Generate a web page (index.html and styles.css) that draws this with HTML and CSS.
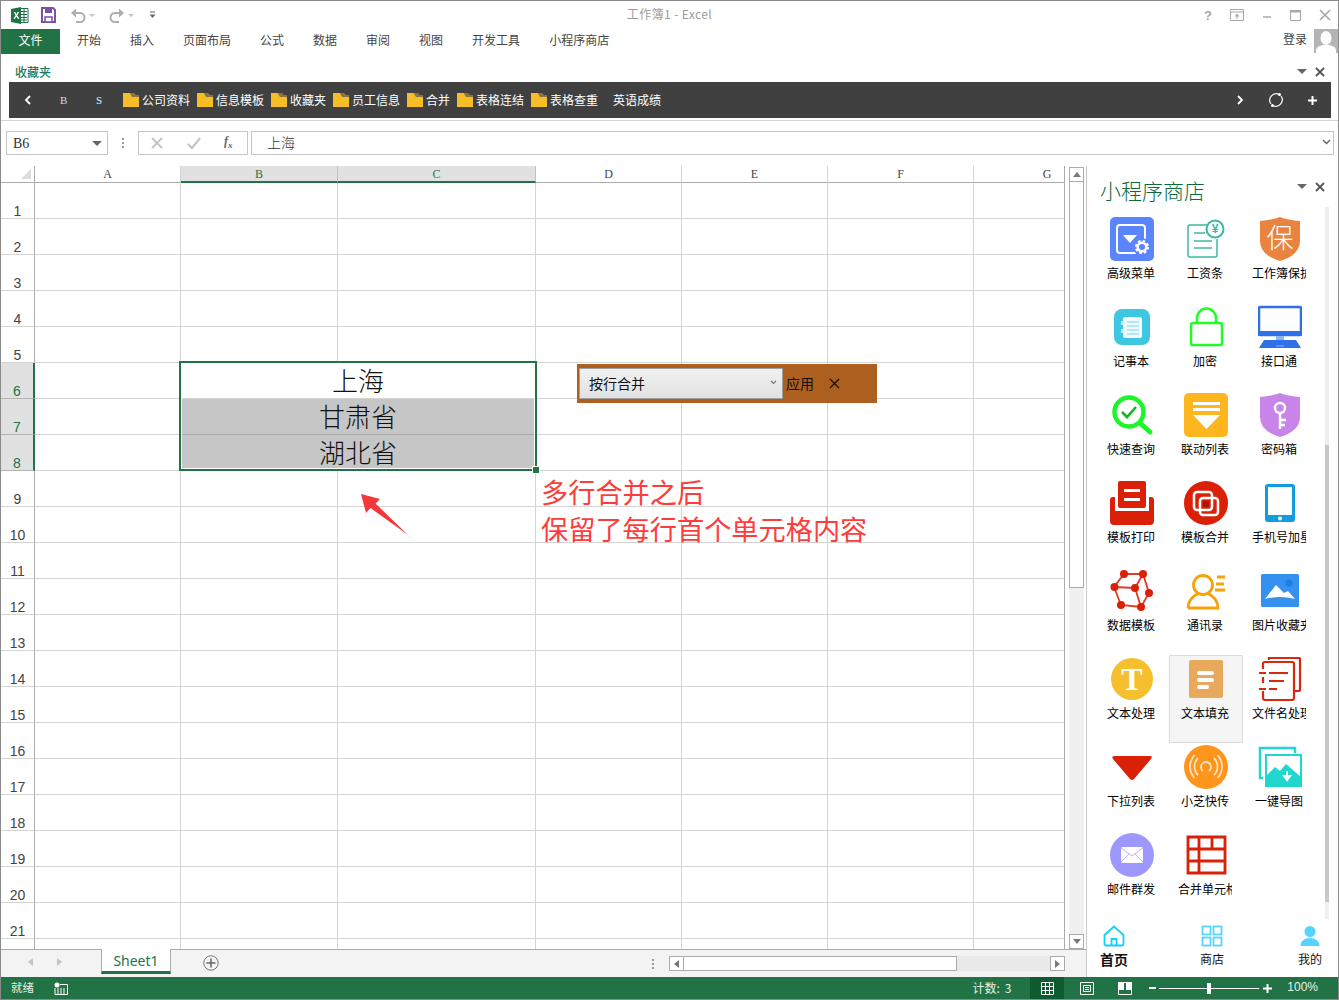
FILE: index.html
```html
<!DOCTYPE html>
<html lang="zh-CN">
<head>
<meta charset="utf-8">
<title>工作簿1 - Excel</title>
<link rel="stylesheet" href="styles.css">
</head>
<body>
<div class="window">
  <header class="titlebar">
    <div class="qat">
      <svg class="qi-xl" width="18" height="17" viewBox="0 0 18 17"><path d="M7 1.500h10v14H7z" fill="#fff" stroke="#217346"/><path d="M10 4.500h6M10 7.500h6M10 10.500h6M10 13h6M13 2v13" stroke="#217346"/><path d="M0 2l10-2v17L0 15z" fill="#217346"/><path d="M2.600 5l2 3.300-2.200 3.500h1.600l1.400-2.400 1.400 2.400h1.700L6.200 8.300l2-3.300H6.600L5.400 7.200 4.200 5z" fill="#fff"/></svg>
      <svg class="qi-save" width="15" height="16" viewBox="0 0 15 16"><path d="M1 1h11l2 2v12H1z" fill="#fff" stroke="#7d4fa5" stroke-width="2"/><path d="M4 1h7v5H4z" fill="#7d4fa5"/><path d="M4 10h7v5H4z" fill="#fff" stroke="#7d4fa5" stroke-width="1.500"/></svg>
      <svg class="qi-undo" width="16" height="15" viewBox="0 0 16 15"><path d="M3 5h7a4.500 4.500 0 0 1 0 9H6" fill="none" stroke="#aeaeae" stroke-width="2"/><path d="M6 0.500v9L1 5z" fill="#aeaeae"/></svg>
      <span class="caret-s"></span>
      <svg class="qi-redo" width="16" height="15" viewBox="0 0 16 15"><path d="M13 5H6a4.500 4.500 0 0 0 0 9h4" fill="none" stroke="#aeaeae" stroke-width="2"/><path d="M10 0.500v9L15 5z" fill="#aeaeae"/></svg>
      <span class="caret-s"></span>
      <svg class="qi-cust" width="7" height="8" viewBox="0 0 7 8"><path d="M1 1h5" stroke="#666"/><path d="M0.500 3.500h6L3.500 7z" fill="#666"/></svg>
    </div>
    <div class="doc-title">工作簿1 - Excel</div>
    <div class="winbtns">
      <span class="help">?</span>
      <svg width="14" height="12" viewBox="0 0 14 12"><path d="M.5.500h13v11H.500zM.5 3h13" fill="none" stroke="#a8a8a8"/><path d="M7 4.500l2.500 3h-5zM6.500 7h1v3h-1z" fill="#a8a8a8"/></svg>
      <svg width="10" height="10" viewBox="0 0 10 10"><path d="M1 7h8" stroke="#a8a8a8" stroke-width="1.500"/></svg>
      <svg width="11" height="11" viewBox="0 0 11 11"><path d="M.5 1.500h10v9H.500z" fill="none" stroke="#a8a8a8"/><path d="M0 0h11v2.500H0z" fill="#a8a8a8"/></svg>
      <svg width="12" height="12" viewBox="0 0 12 12"><path d="M1 1l10 10M11 1L1 11" stroke="#a8a8a8" stroke-width="1.600"/></svg>
    </div>
  </header>

  <nav class="ribbon-tabs">
    <span class="file-tab">文件</span>
    <ul class="tab-list">
      <li>开始</li><li>插入</li><li>页面布局</li><li>公式</li><li>数据</li><li>审阅</li><li>视图</li><li>开发工具</li><li>小程序商店</li>
    </ul>
    <span class="login">登录</span>
    <svg class="avatar" width="24" height="24" viewBox="0 0 24 24"><path d="M0 0h24v24H0z" fill="#b4b4b4"/><ellipse cx="12" cy="9" rx="5.500" ry="7" fill="#fff"/><path d="M2 24v-3c0-3 4-5 10-5s10 2 10 5v3z" fill="#fff"/></svg>
  </nav>

  <section class="favorites">
    <div class="fav-head">
      <span class="fav-title">收藏夹</span>
      <span class="pane-ctl"><i class="tri"></i><svg width="10" height="10" viewBox="0 0 10 10"><path d="M1 1l8 8M9 1L1 9" stroke="#555" stroke-width="1.800"/></svg></span>
    </div>
    <div class="fav-bar">
      <svg class="chev-l" width="7" height="10" viewBox="0 0 7 10"><path d="M6 1L2 5l4 4" fill="none" stroke="#fff" stroke-width="1.800"/></svg>
      <span class="fav-b">B</span>
      <span class="fav-s">S</span>
      <span class="fav-item"><svg class="folder" width="16" height="14" viewBox="0 0 16 14"><path d="M0 0h7l2 3h7v11H0z" fill="#f6bd27"/><path d="M7 0h4l2 2h3v2H9z" fill="#8a7440"/></svg>公司资料</span>
      <span class="fav-item"><svg class="folder" width="16" height="14" viewBox="0 0 16 14"><path d="M0 0h7l2 3h7v11H0z" fill="#f6bd27"/><path d="M7 0h4l2 2h3v2H9z" fill="#8a7440"/></svg>信息模板</span>
      <span class="fav-item"><svg class="folder" width="16" height="14" viewBox="0 0 16 14"><path d="M0 0h7l2 3h7v11H0z" fill="#f6bd27"/><path d="M7 0h4l2 2h3v2H9z" fill="#8a7440"/></svg>收藏夹</span>
      <span class="fav-item"><svg class="folder" width="16" height="14" viewBox="0 0 16 14"><path d="M0 0h7l2 3h7v11H0z" fill="#f6bd27"/><path d="M7 0h4l2 2h3v2H9z" fill="#8a7440"/></svg>员工信息</span>
      <span class="fav-item"><svg class="folder" width="16" height="14" viewBox="0 0 16 14"><path d="M0 0h7l2 3h7v11H0z" fill="#f6bd27"/><path d="M7 0h4l2 2h3v2H9z" fill="#8a7440"/></svg>合并</span>
      <span class="fav-item"><svg class="folder" width="16" height="14" viewBox="0 0 16 14"><path d="M0 0h7l2 3h7v11H0z" fill="#f6bd27"/><path d="M7 0h4l2 2h3v2H9z" fill="#8a7440"/></svg>表格连结</span>
      <span class="fav-item"><svg class="folder" width="16" height="14" viewBox="0 0 16 14"><path d="M0 0h7l2 3h7v11H0z" fill="#f6bd27"/><path d="M7 0h4l2 2h3v2H9z" fill="#8a7440"/></svg>表格查重</span>
      <span class="fav-text">英语成绩</span>
      <span class="fav-right">
        <svg width="7" height="10" viewBox="0 0 7 10"><path d="M1 1l4 4-4 4" fill="none" stroke="#fff" stroke-width="1.800"/></svg>
        <svg width="16" height="16" viewBox="0 0 16 16"><path d="M3 12A6.500 6.500 0 0 1 11 2.300M13 4A6.500 6.500 0 0 1 5 13.700" fill="none" stroke="#fff" stroke-width="1.200"/><circle cx="11.500" cy="2.500" r="1.500" fill="#fff"/><circle cx="4.500" cy="13.500" r="1.500" fill="#fff"/></svg>
        <svg width="9" height="9" viewBox="0 0 9 9"><path d="M4.500 0v9M0 4.500h9" stroke="#fff" stroke-width="2"/></svg>
      </span>
    </div>
  </section>

  <div class="formula-row">
    <div class="name-box"><span>B6</span><i class="tri"></i></div>
    <span class="fx-dots"></span>
    <div class="fx-btns">
      <svg width="12" height="12" viewBox="0 0 12 12"><path d="M1 1l10 10M11 1L1 11" stroke="#c4c4c4" stroke-width="1.800"/></svg>
      <svg width="14" height="12" viewBox="0 0 14 12"><path d="M1 7l4 4 8-10" fill="none" stroke="#c4c4c4" stroke-width="2.200"/></svg>
      <span class="fx-label">f<sub>x</sub></span>
    </div>
    <div class="fx-input"><span>上海</span><svg width="9" height="6" viewBox="0 0 9 6"><path d="M1 1l3.500 3.500L8 1" fill="none" stroke="#666" stroke-width="1.500"/></svg></div>
  </div>

  <div class="workspace">
    <div class="book">
      <div class="sheet-row">
        <div class="sheet">
          <table class="cells">
            <colgroup><col class="c-h"><col class="c-a"><col class="c-b"><col class="c-c"><col class="c-a"><col class="c-a"><col class="c-a"><col class="c-a"></colgroup>
            <thead><tr><th class="corner"><i></i></th><th>A</th><th class="sel">B</th><th class="sel">C</th><th>D</th><th>E</th><th>F</th><th class="g">G</th></tr></thead>
            <tbody>
              <tr><th>1</th><td></td><td></td><td></td><td></td><td></td><td></td><td></td></tr>
              <tr><th>2</th><td></td><td></td><td></td><td></td><td></td><td></td><td></td></tr>
              <tr><th>3</th><td></td><td></td><td></td><td></td><td></td><td></td><td></td></tr>
              <tr><th>4</th><td></td><td></td><td></td><td></td><td></td><td></td><td></td></tr>
              <tr><th>5</th><td></td><td></td><td></td><td></td><td></td><td></td><td></td></tr>
              <tr><th class="sel">6</th><td></td><td colspan="2" class="big">上海</td><td></td><td></td><td></td><td></td></tr>
              <tr><th class="sel">7</th><td></td><td colspan="2" class="big grey">甘肃省</td><td></td><td></td><td></td><td></td></tr>
              <tr><th class="sel">8</th><td></td><td colspan="2" class="big grey">湖北省</td><td></td><td></td><td></td><td></td></tr>
              <tr><th>9</th><td></td><td></td><td></td><td></td><td></td><td></td><td></td></tr>
              <tr><th>10</th><td></td><td></td><td></td><td></td><td></td><td></td><td></td></tr>
              <tr><th>11</th><td></td><td></td><td></td><td></td><td></td><td></td><td></td></tr>
              <tr><th>12</th><td></td><td></td><td></td><td></td><td></td><td></td><td></td></tr>
              <tr><th>13</th><td></td><td></td><td></td><td></td><td></td><td></td><td></td></tr>
              <tr><th>14</th><td></td><td></td><td></td><td></td><td></td><td></td><td></td></tr>
              <tr><th>15</th><td></td><td></td><td></td><td></td><td></td><td></td><td></td></tr>
              <tr><th>16</th><td></td><td></td><td></td><td></td><td></td><td></td><td></td></tr>
              <tr><th>17</th><td></td><td></td><td></td><td></td><td></td><td></td><td></td></tr>
              <tr><th>18</th><td></td><td></td><td></td><td></td><td></td><td></td><td></td></tr>
              <tr><th>19</th><td></td><td></td><td></td><td></td><td></td><td></td><td></td></tr>
              <tr><th>20</th><td></td><td></td><td></td><td></td><td></td><td></td><td></td></tr>
              <tr><th>21</th><td></td><td></td><td></td><td></td><td></td><td></td><td></td></tr>
              <tr><th></th><td></td><td></td><td></td><td></td><td></td><td></td><td></td></tr>
            </tbody>
          </table>
          <div class="selection"><i class="handle"></i></div>
          <div class="merge-widget">
            <div class="merge-select"><span>按行合并</span><svg width="7" height="5" viewBox="0 0 7 5"><path d="M1 1l2.500 2.500L6 1" fill="none" stroke="#777" stroke-width="1.200"/></svg></div>
            <span class="apply">应用</span>
            <svg class="widget-x" width="11" height="11" viewBox="0 0 11 11"><path d="M1 1l9 9M10 1l-9 9" stroke="#111" stroke-width="1.300"/></svg>
          </div>
          <div class="note">多行合并之后<br>保留了每行首个单元格内容</div>
          <svg class="arrow" width="50" height="44" viewBox="0 0 50 44"><path d="M1 1L20 6 15.500 10.500 48 42 10.500 15 6 20z" fill="#f4393c"/></svg>
        </div>
        <div class="vscroll">
          <span class="sb-btn"><i class="up"></i></span>
          <span class="sb-thumb"></span>
          <span class="sb-track"></span>
          <span class="sb-btn"><i class="down"></i></span>
        </div>
      </div>
      <div class="tabs-row">
        <span class="tab-nav"><i class="nav-l"></i><i class="nav-r"></i></span>
        <span class="sheet-tab">Sheet1</span>
        <svg class="add-sheet" width="16" height="16" viewBox="0 0 16 16"><circle cx="8" cy="8" r="7.200" fill="none" stroke="#777"/><path d="M8 3.500v9M3.500 8h9" stroke="#666" stroke-width="1.500"/></svg>
        <span class="tab-dots"></span>
        <div class="hscroll">
          <span class="hb"><i class="left"></i></span>
          <span class="h-thumb"></span>
          <span class="h-track"></span>
          <span class="hb"><i class="right"></i></span>
        </div>
      </div>
    </div>

    <aside class="pane">
      <div class="pane-head">
        <h2>小程序商店</h2>
        <span class="pane-ctl"><i class="tri"></i><svg width="10" height="10" viewBox="0 0 10 10"><path d="M1 1l8 8M9 1L1 9" stroke="#555" stroke-width="1.800"/></svg></span>
      </div>
      <div class="pane-body">
        <div class="apps">
          <div class="app"><svg class="ic" viewBox="0 0 44 44"><rect width="44" height="44" rx="5" fill="#5b84ff"/><path d="M28 36H10a3 3 0 0 1-3-3V11a3 3 0 0 1 3-3h22a3 3 0 0 1 3 3v12" fill="none" stroke="#fff" stroke-width="2"/><path d="M13 18h14l-7 8z" fill="#fff"/><circle cx="32" cy="30" r="9" fill="#5b84ff"/><circle cx="32" cy="30" r="4.300" fill="none" stroke="#fff" stroke-width="2.500"/><circle cx="32" cy="30" r="6" fill="none" stroke="#fff" stroke-width="2.200" stroke-dasharray="2.500 2.200"/></svg><span class="lbl">高级菜单</span></div>
          <div class="app"><svg class="ic" viewBox="0 0 44 44"><path d="M23 8H6a2 2 0 0 0-2 2v28a2 2 0 0 0 2 2h25a2 2 0 0 0 2-2V22" fill="none" stroke="#3cb9a0" stroke-width="1.500"/><path d="M10 16h11M10 24h18M10 31h18" stroke="#3cb9a0" stroke-width="1.500"/><circle cx="31" cy="12" r="8.500" fill="#fff" stroke="#3cb9a0" stroke-width="2"/><text x="31" y="16" class="yen">¥</text></svg><span class="lbl">工资条</span></div>
          <div class="app"><svg class="ic" viewBox="0 0 44 44"><path d="M22 0Q30 3 42 4V24Q42 38 22 44 2 38 2 24V4Q14 3 22 0z" fill="#e8843f"/><text x="22" y="31" class="bao">保</text></svg><span class="lbl">工作簿保护</span></div>

          <div class="app"><svg class="ic" viewBox="0 0 44 44"><rect x="4" y="4" width="36" height="36" rx="8" fill="#3dc7e0"/><rect x="13" y="12" width="19" height="21" rx="2" fill="#fff" opacity=".92"/><path d="M11 16h3v4h-3zM11 24h3v4h-3z" fill="#bff0f7"/><path d="M17 17h12M17 21h12M17 25h12M17 29h12" stroke="#9fe3ef" stroke-width="1.500"/></svg><span class="lbl">记事本</span></div>
          <div class="app"><svg class="ic" viewBox="0 0 44 44"><path d="M13 18V13a9.500 9.500 0 0 1 19 0v5" fill="none" stroke="#1dff27" stroke-width="2.500"/><rect x="7" y="18" width="31" height="22" rx="2" fill="#fff" stroke="#1dff27" stroke-width="2.500"/></svg><span class="lbl">加密</span></div>
          <div class="app"><svg class="ic" viewBox="0 0 44 44"><rect x="1" y="2" width="42" height="28" rx="1.500" fill="#fff" stroke="#2f6fe8" stroke-width="2.500"/><rect x="0" y="26" width="44" height="5" rx="1" fill="#2f6fe8"/><path d="M18 31h8v4h-8z" fill="#8fb6f4"/><path d="M6 35h32l5 8H1z" fill="#2f6fe8"/><path d="M18 41h8" stroke="#8fb6f4"/></svg><span class="lbl">接口通</span></div>

          <div class="app"><svg class="ic" viewBox="0 0 44 44"><circle cx="19" cy="19" r="14.500" fill="none" stroke="#1cf52a" stroke-width="4.500"/><path d="M30 30l10 9" stroke="#1cf52a" stroke-width="5" stroke-linecap="round"/><path d="M12 19l5 5 9-10" fill="none" stroke="#16b522" stroke-width="2.600"/></svg><span class="lbl">快速查询</span></div>
          <div class="app"><svg class="ic" viewBox="0 0 44 44"><rect width="44" height="44" rx="5" fill="#fdb61d"/><path d="M9 9h27v3H9zM9 15h27v3H9z" fill="#fff"/><path d="M9 22h27L22.500 36z" fill="#fff"/></svg><span class="lbl">联动列表</span></div>
          <div class="app"><svg class="ic" viewBox="0 0 44 44"><path d="M22 0Q30 3 42 4V24Q42 38 22 44 2 38 2 24V4Q14 3 22 0z" fill="#c984e9"/><circle cx="22" cy="15" r="5" fill="none" stroke="#fff" stroke-width="2.500"/><path d="M22 20v16M22 27h6M22 32h5" stroke="#fff" stroke-width="2.500"/></svg><span class="lbl">密码箱</span></div>

          <div class="app"><svg class="ic" viewBox="0 0 44 44"><path d="M0 19q0-3 3-3h2v14h34V16h2q3 0 3 3v21q0 4-4 4H4q-4 0-4-4z" fill="#db2008"/><rect x="8" y="0" width="28" height="27" rx="2" fill="#db2008"/><path d="M14 8h16v3H14zM14 17h16v3H14z" fill="#fff"/></svg><span class="lbl">模板打印</span></div>
          <div class="app"><svg class="ic" viewBox="0 0 44 44"><circle cx="22" cy="22" r="22" fill="#db2008"/><rect x="10" y="11" width="18" height="18" rx="3" fill="none" stroke="#fff" stroke-width="2.500"/><rect x="16" y="17" width="18" height="17" rx="3" fill="none" stroke="#fff" stroke-width="2.500"/><rect x="19" y="20" width="6" height="6" fill="#a81504"/></svg><span class="lbl">模板合并</span></div>
          <div class="app"><svg class="ic" viewBox="0 0 44 44"><rect x="7" y="3" width="30" height="38" rx="3" fill="#129ce0"/><rect x="10" y="6" width="24" height="28" fill="#fff"/><circle cx="22" cy="37.500" r="2" fill="#fff"/></svg><span class="lbl">手机号加星</span></div>

          <div class="app"><svg class="ic" viewBox="0 0 44 44"><path d="M14 5H33L39 24 31 38 11 36 4 18zM4 18L25 19 33 5M25 19L31 38" fill="none" stroke="#df3a22" stroke-width="1.800"/><g fill="#db2008"><circle cx="14" cy="5" r="4"/><circle cx="33" cy="5" r="4"/><circle cx="4.500" cy="18" r="4"/><circle cx="25" cy="19" r="4"/><circle cx="39" cy="24" r="4"/><circle cx="11" cy="36" r="4"/><circle cx="31" cy="38" r="4"/></g></svg><span class="lbl">数据模板</span></div>
          <div class="app"><svg class="ic" viewBox="0 0 44 44"><circle cx="19" cy="16" r="9.500" fill="none" stroke="#f8a10a" stroke-width="2.800"/><path d="M4 39c0-7 5-12 10-14.500M24 24.500c5 2.500 10 7.500 10 14.500H4" fill="none" stroke="#f8a10a" stroke-width="2.800"/><path d="M33 8h8M32 15h8M31 21h10" stroke="#f8a10a" stroke-width="2.800"/></svg><span class="lbl">通讯录</span></div>
          <div class="app"><svg class="ic" viewBox="0 0 44 44"><rect x="3" y="5" width="38" height="33" rx="1.500" fill="#3590f0"/><circle cx="31" cy="14" r="3.500" fill="#1d7fe6"/><path d="M7 30L18 16l8 8 4-2 7 8Q22 26 7 30z" fill="#fff"/></svg><span class="lbl">图片收藏夹</span></div>

          <div class="app"><svg class="ic" viewBox="0 0 44 44"><circle cx="22" cy="22" r="21" fill="#f6bf2e"/><text x="22" y="33" class="tee">T</text></svg><span class="lbl">文本处理</span></div>
          <div class="app hot"><svg class="ic" viewBox="0 0 44 44"><rect x="5" y="3" width="34" height="38" rx="2" fill="#e8a95c"/><rect x="13" y="14" width="17" height="4" rx="2" fill="#fff"/><rect x="13" y="21" width="17" height="4" rx="2" fill="#fff"/><rect x="13" y="28" width="12" height="4" rx="2" fill="#fff"/></svg><span class="lbl">文本填充</span></div>
          <div class="app"><svg class="ic" viewBox="0 0 44 44"><path d="M11 3V1H41a1 1 0 0 1 1 1V33a1 1 0 0 1-1 1H37" fill="none" stroke="#d9280f" stroke-width="2.200"/><path d="M5 12V7a2 2 0 0 1 2-2H34a2 2 0 0 1 2 2V41a2 2 0 0 1-2 2H7a2 2 0 0 1-2-2V34M5 20v6" fill="none" stroke="#d9280f" stroke-width="2.200"/><path d="M1 16h7M1 32h7M11 16h19M11 24h15M11 32h8" stroke="#d9280f" stroke-width="2.200"/></svg><span class="lbl">文件名处理</span></div>

          <div class="app"><svg class="ic" viewBox="0 0 44 44"><path d="M5 11H40Q43 11 41 14L24 34Q22 36 20 34L3 14Q1 11 5 11z" fill="#db2008"/></svg><span class="lbl">下拉列表</span></div>
          <div class="app"><svg class="ic" viewBox="0 0 44 44"><circle cx="22" cy="22" r="22" fill="#ff951a"/><path d="M19 26a5 5 0 1 1 6 0" fill="none" stroke="#ffe2bd" stroke-width="1.800"/><path d="M14 13a12 12 0 0 0 0 17M30 13a12 12 0 0 1 0 17M10.500 10a17 17 0 0 0 0 23M33.500 10a17 17 0 0 1 0 23" fill="none" stroke="#ffe2bd" stroke-width="1.800"/></svg><span class="lbl">小芝快传</span></div>
          <div class="app"><svg class="ic" viewBox="0 0 44 44"><path d="M5 33H2V3H37V8" fill="none" stroke="#21d6cd" stroke-width="2.500"/><rect x="8" y="10" width="35" height="31" fill="#fff" stroke="#21d6cd" stroke-width="2"/><path d="M8 41V31l9-9 5 4 6-7 15 13v9z" fill="#21d6cd"/><path d="M29 26v7M26 31l3 4 3-4z" stroke="#fff" stroke-width="2" fill="#fff"/></svg><span class="lbl">一键导图</span></div>

          <div class="app"><svg class="ic" viewBox="0 0 44 44"><circle cx="22" cy="22" r="22" fill="#9e98fe"/><rect x="11" y="14" width="22" height="16" rx="1.500" fill="#fff"/><path d="M11 15l11 8 11-8M11 29l8-8M33 29l-8-8" fill="none" stroke="#b9b5fe"/></svg><span class="lbl">邮件群发</span></div>
          <div class="app"><svg class="ic" viewBox="0 0 44 44"><path d="M4 4h37v36H4zM4 16h37M4 28h37M15 4v36M28 4v12" fill="none" stroke="#db2008" stroke-width="2.800"/></svg><span class="lbl">合并单元格</span></div>
        </div>
        <div class="pane-scroll"><span class="ps-top"></span><span class="ps-thumb"></span><span class="ps-end"></span></div>
      </div>
      <nav class="pane-nav">
        <span class="nav-item active"><svg width="22" height="22" viewBox="0 0 22 22"><path d="M1.500 10L11 1.500 20.500 10v9a1.500 1.500 0 0 1-1.500 1.500H3A1.500 1.500 0 0 1 1.500 19z" fill="none" stroke="#0fd0ff" stroke-width="1.800"/><path d="M8.500 20.500V14h5v6.500" fill="none" stroke="#0fd0ff" stroke-width="1.800"/></svg><b>首页</b></span>
        <span class="nav-item"><svg width="22" height="22" viewBox="0 0 22 22"><g fill="none" stroke="#55d4ff" stroke-width="1.800"><rect x="1.500" y="1.500" width="8" height="8"/><rect x="12.500" y="1.500" width="8" height="8"/><rect x="1.500" y="12.500" width="8" height="8"/><rect x="12.500" y="12.500" width="8" height="8"/></g></svg>商店</span>
        <span class="nav-item"><svg width="22" height="22" viewBox="0 0 22 22"><circle cx="11" cy="6.500" r="5.500" fill="#55d4ff"/><path d="M1.500 21c0-5 4-8 9.500-8s9.500 3 9.500 8z" fill="#55d4ff"/></svg>我的</span>
      </nav>
    </aside>
  </div>

  <footer class="status">
    <span class="st-ready">就绪</span>
    <svg class="st-macro" width="14" height="13" viewBox="0 0 14 13"><circle cx="3" cy="3" r="2.500" fill="#fff"/><path d="M6 2.500h7.500v10H1V6" fill="none" stroke="#fff"/><path d="M3 7h9M3 9h9M3 11h9" stroke="#fff" stroke-dasharray="2 1"/></svg>
    <span class="st-count">计数: 3</span>
    <span class="view-btn on"><svg width="13" height="13" viewBox="0 0 13 13"><path d="M.5.500h12v12H.500zM.5 4.500h12M.5 8.500h12M4.500.5v12M8.500.5v12" fill="none" stroke="#fff"/></svg></span>
    <span class="view-btn"><svg width="14" height="13" viewBox="0 0 14 13"><path d="M.5.500h13v12H.500z" fill="none" stroke="#fff"/><path d="M3.500 3.500h7v6h-7zM5 5.500h4M5 7.500h4" fill="none" stroke="#fff"/></svg></span>
    <span class="view-btn"><svg width="14" height="13" viewBox="0 0 14 13"><path d="M.5.500h13v12H.500z" fill="none" stroke="#fff"/><path d="M0 0h6v8H0zM8 0h6v8H8z" fill="#fff"/></svg></span>
    <span class="zoom-minus"></span>
    <span class="zoom-slider"><i></i></span>
    <svg class="zoom-plus" width="9" height="9" viewBox="0 0 9 9"><path d="M4.500 0v9M0 4.500h9" stroke="#fff" stroke-width="2"/></svg>
    <span class="zoom-val">100%</span>
  </footer>
</div>
</body>
</html>
```
FILE: styles.css
```css
* { box-sizing: border-box; }
html, body { margin: 0; padding: 0; background: #fff; }
body { font-family: "Noto Sans CJK SC", "Liberation Sans", sans-serif; font-size: 12px; color: #333; }
svg { display: block; flex: none; }
i { display: block; font-style: normal; }

.window { width: 1339px; height: 1000px; border: 1px solid #8a8a8a; display: flex; flex-direction: column; overflow: hidden; background: #fff; }

/* title bar */
.titlebar { height: 28px; flex: none; display: grid; grid-template-columns: 1fr auto 1fr; align-items: center; }
.qat { display: flex; align-items: center; }
.qi-xl { margin-left: 10px; }
.qi-save { margin-left: 12px; }
.qi-undo { margin-left: 14px; }
.qi-redo { margin-left: 14px; }
.qi-cust { margin-left: 15px; }
.caret-s { width: 0; height: 0; margin-left: 3px; border: 3px solid transparent; border-top: 3px solid #c4c4c4; border-bottom: 0; }
.doc-title { color: #9c9c9c; font-size: 12px; letter-spacing: .4px; line-height: 26px; height: 28px; }
.winbtns { display: flex; align-items: center; justify-content: flex-end; padding-right: 7px; gap: 18px; }
.help { color: #a8a8a8; font: bold 13px "Liberation Sans", sans-serif; width: 8px; }

/* ribbon tabs */
.ribbon-tabs { height: 25px; flex: none; display: flex; align-items: stretch; }
.file-tab { width: 59px; height: 25px; background: #217346; color: #fff; text-align: center; line-height: 22px; font-size: 12px; }
.tab-list { list-style: none; margin: 0 0 0 17px; padding: 0; display: flex; gap: 29px; flex: 1; line-height: 21px; color: #444; }
.login { line-height: 20px; color: #444; margin-right: 7px; }

/* favourites */
.favorites { flex: none; }
.fav-head { height: 28px; display: flex; align-items: center; justify-content: space-between; padding: 11px 13px 4px 14px; }
.fav-title { color: #1f7a5f; font-weight: 500; }
.pane-ctl { display: flex; align-items: center; gap: 8px; }
.tri { width: 0; height: 0; border: 5px solid transparent; border-top: 5px solid #666; border-bottom: 0; }
.fav-bar { height: 36px; margin-left: 8px; margin-right: 7px; background: #404040; color: #fff; display: flex; align-items: center; padding-left: 15px; }
.chev-l { margin-right: 29px; }
.fav-b { font: 11px "Liberation Serif", serif; width: 36px; color: #cfd4ff; }
.fav-s { font: 11px "Liberation Serif", serif; width: 27px; color: #d5f0ff; }
.fav-item { display: flex; align-items: center; gap: 3px; margin-right: 7px; padding-bottom: 2px; }
.fav-item svg { margin-top: 2px; }
.fav-text { margin-left: 8px; padding-bottom: 2px; }
.fav-right { margin-left: auto; display: flex; align-items: center; gap: 24px; margin-right: 14px; }

/* formula bar */
.formula-row { flex: none; height: 35px; margin-top: 2px; margin-bottom: 11px; padding: 10px 4px 0 5px; border-top: 1px solid #d4d4d4; display: flex; align-items: stretch; }
.name-box { width: 102px; border: 1px solid #c6c6c6; display: flex; align-items: center; justify-content: space-between; padding: 1px 5px 0 6px; font: 14px "Liberation Serif", serif; color: #333; }
.fx-dots { width: 2px; margin: 0 14px 0 14px; background: radial-gradient(circle, #999 1px, transparent 1.200px) 0 0 / 2px 4px repeat-y; height: 12px; align-self: center; }
.fx-btns { width: 110px; border: 1px solid #c6c6c6; display: flex; align-items: center; padding-left: 12px; gap: 24px; }
.fx-label { font: italic bold 12px "Liberation Serif", serif; color: #666; margin-left: -1px; line-height: 1; }
.fx-label sub { font-size: 9px; }
.fx-input { flex: 1; margin-left: 3px; border: 1px solid #c6c6c6; display: flex; align-items: center; justify-content: space-between; padding: 0 2px 2px 15px; font-size: 14px; font-weight: 300; color: #333; }

/* workspace */
.workspace { flex: none; height: 811px; display: flex; }
.book { width: 1086px; border-right: 1px solid #c8c8c8; display: flex; flex-direction: column; }
.sheet-row { height: 783px; display: flex; }
.sheet { width: 1064px; height: 783px; flex: none; position: relative; overflow: hidden; border-right: 1px solid #ababab; }

.cells { border-collapse: separate; border-spacing: 0; table-layout: fixed; width: 1118px; }
.c-h { width: 34px; }
.c-a { width: 146px; }
.c-b { width: 157px; }
.c-c { width: 198px; }
.cells thead th { height: 17px; padding: 2px 0 0; vertical-align: top; font: 12px/13px "Liberation Serif", serif; color: #444; border-bottom: 1px solid #ababab; border-right: 1px solid #d4d4d4; }
.cells thead th.sel { background: #e1e1e1; color: #217346; border-bottom: 2px solid #217346; border-right-color: #c2c2c2; }
.cells thead th.g { border-right: 0; }
.cells thead th.corner { position: relative; border-right: 1px solid #ababab; }
.corner i { position: absolute; right: 3px; bottom: 3px; width: 0; height: 0; border-left: 10px solid transparent; border-bottom: 10px solid #dcdcdc; }
.cells tbody th { height: 36px; padding: 0; font: 400 14px/14px "Liberation Sans", sans-serif; color: #444; vertical-align: bottom; border-right: 1px solid #ababab; border-bottom: 1px solid #d4d4d4; }
.cells tbody th.sel { background: #e1e1e1; color: #217346; border-right: 2px solid #217346; border-bottom-color: #b4b4b4; }
.cells td { height: 36px; padding: 0; border-right: 1px solid #d4d4d4; border-bottom: 1px solid #d4d4d4; }
.cells td.big { font-size: 26px; font-weight: 300; line-height: 32px; padding-bottom: 2px; color: #111; text-align: center; }
.cells td.grey { background: #c6c6c6; border-bottom-color: #a8a8a8; }

.selection { position: absolute; left: 178px; top: 195px; width: 358px; height: 110px; border: 2px solid #217346; box-shadow: inset 0 0 0 1px #fff; }
.handle { position: absolute; right: -4px; bottom: -4px; width: 6px; height: 6px; background: #217346; outline: 1px solid #fff; }

.merge-widget { position: absolute; left: 576px; top: 198px; width: 300px; height: 39px; background: #ac5f1e; display: flex; align-items: center; padding-left: 2px; }
.merge-select { width: 204px; height: 31px; background: linear-gradient(#f0f0f0, #e2e2e2); border: 1px solid #a0a0a0; display: flex; align-items: center; justify-content: space-between; padding: 0 5px 2px 9px; font-size: 14px; color: #111; }
.apply { margin-left: 3px; padding-bottom: 2px; font-size: 14px; color: #111; }
.widget-x { margin-left: 15px; }

.note { position: absolute; left: 540px; top: 307px; color: #ff3c3c; font-size: 27.2px; line-height: 37px; white-space: nowrap; }
.arrow { position: absolute; left: 359px; top: 327px; }

.vscroll { width: 21px; padding: 1px 2px 0 4px; display: flex; flex-direction: column; }
.sb-btn { height: 15px; flex: none; border: 1px solid #ababab; background: #fff; display: flex; align-items: center; justify-content: center; }
.sb-thumb { height: 406px; flex: none; border: 1px solid #ababab; border-top: 0; background: #fff; }
.sb-track { flex: 1; background: #f0f0f0; }
.up { border: 4px solid transparent; border-bottom: 5px solid #777; border-top: 0; }
.down { border: 4px solid transparent; border-top: 5px solid #777; border-bottom: 0; }

/* sheet tabs */
.tabs-row { height: 28px; flex: none; border-top: 1px solid #ababab; background: #f3f3f3; display: flex; }
.tab-nav { width: 100px; display: flex; align-items: center; padding-left: 27px; gap: 24px; height: 23px; }
.nav-l { border: 4px solid transparent; border-right: 5px solid #c4c4c4; border-left: 0; }
.nav-r { border: 4px solid transparent; border-left: 5px solid #c4c4c4; border-right: 0; }
.sheet-tab { width: 70px; height: 25px; margin-top: -1px; background: #fff; border: 1px solid #ababab; border-top: 0; border-bottom: 3px solid #217346; color: #217346; text-align: center; font: 14px/24px "Noto Sans", sans-serif; }
.add-sheet { margin: 5px 0 0 32px; }
.tab-dots { width: 2px; height: 12px; margin: 8px 0 0 433px; background: radial-gradient(circle, #999 1px, transparent 1.200px) 0 0 / 2px 4px repeat-y; }
.hscroll { width: 396px; height: 15px; margin: 6px 0 0 15px; display: flex; background: #e9e9e9; flex: none; }
.hb { width: 15px; flex: none; height: 15px; background: #fff; border: 1px solid #ababab; display: flex; align-items: center; justify-content: center; }
.h-thumb { width: 273px; flex: none; background: #fff; border: 1px solid #ababab; border-left: 0; }
.h-track { flex: 1; }
.left { border: 4px solid transparent; border-right: 5px solid #777; border-left: 0; }
.right { border: 4px solid transparent; border-left: 5px solid #777; border-right: 0; }

/* store pane */
.pane { flex: 1; display: flex; flex-direction: column; min-width: 0; }
.pane-head { height: 41px; flex: none; display: flex; justify-content: space-between; align-items: center; padding: 6px 13px 0 13px; }
.pane-head .pane-ctl { margin-top: -6px; }
.pane-head h2 { margin: 0; font-size: 21px; font-weight: 300; color: #0b6b3a; line-height: 30px; }
.pane-body { height: 712px; flex: none; display: flex; padding-left: 8px; }
.apps { width: 222px; padding-top: 8px; display: grid; grid-template-columns: repeat(3, 74px); grid-auto-rows: 88px; }
.app { display: flex; flex-direction: column; align-items: center; padding-top: 2px; }
.app.hot { background: #f5f5f5; box-shadow: inset 0 0 0 1px #dcdcdc; }
.ic { width: 44px; height: 44px; }
.lbl { width: 54px; margin: 4px 0 0 -2px; line-height: 16px; font-size: 12px; color: #000; white-space: nowrap; overflow: hidden; display: flex; justify-content: safe center; }
.yen { font: bold 12px "Liberation Sans", sans-serif; fill: #3cb9a0; text-anchor: middle; }
.bao { font: 300 27px "Noto Sans CJK SC", sans-serif; fill: #fff; text-anchor: middle; }
.tee { font: bold 32px "Liberation Serif", serif; fill: #fff; text-anchor: middle; }
.pane-scroll { width: 4px; margin-left: 8px; display: flex; flex-direction: column; }
.ps-top { height: 238px; background: #eeeeee; }
.ps-thumb { height: 457px; background: #c8c8c8; }
.ps-end { flex: 1; background: #f0f0f0; }
.pane-nav { flex: 1; display: flex; justify-content: space-between; padding: 6px 8px 0 7px; }
.nav-item { width: 40px; display: flex; flex-direction: column; align-items: center; font-size: 12px; color: #111; gap: 3px; line-height: 18px; }
.nav-item b { font-size: 14px; font-weight: 700; color: #111; }

/* status bar */
.status { flex: 1; background: #217346; color: #e6f0ea; display: flex; align-items: center; }
.st-ready { margin-left: 10px; font-size: 11.5px; padding-bottom: 2px; }
.st-macro { margin-left: 20px; }
.st-count { margin-left: auto; font-size: 12px; margin-right: 19px; padding-bottom: 2px; word-spacing: 2px; }
.view-btn { width: 34px; height: 22px; display: flex; align-items: center; justify-content: center; margin-right: 4px; }
.view-btn.on { background: #0e5c2f; margin-right: 6px; }
.zoom-minus { width: 7px; height: 2px; background: #fff; margin-left: 3px; }
.zoom-slider { width: 100px; height: 1px; background: #fff; margin-left: 3px; position: relative; }
.zoom-slider i { position: absolute; left: 48px; top: -5px; width: 4px; height: 11px; background: #fff; }
.zoom-plus { margin-left: 4px; }
.zoom-val { margin-left: 15px; margin-right: 20px; padding-bottom: 2px; font: 12px "Liberation Sans", sans-serif; }
```
